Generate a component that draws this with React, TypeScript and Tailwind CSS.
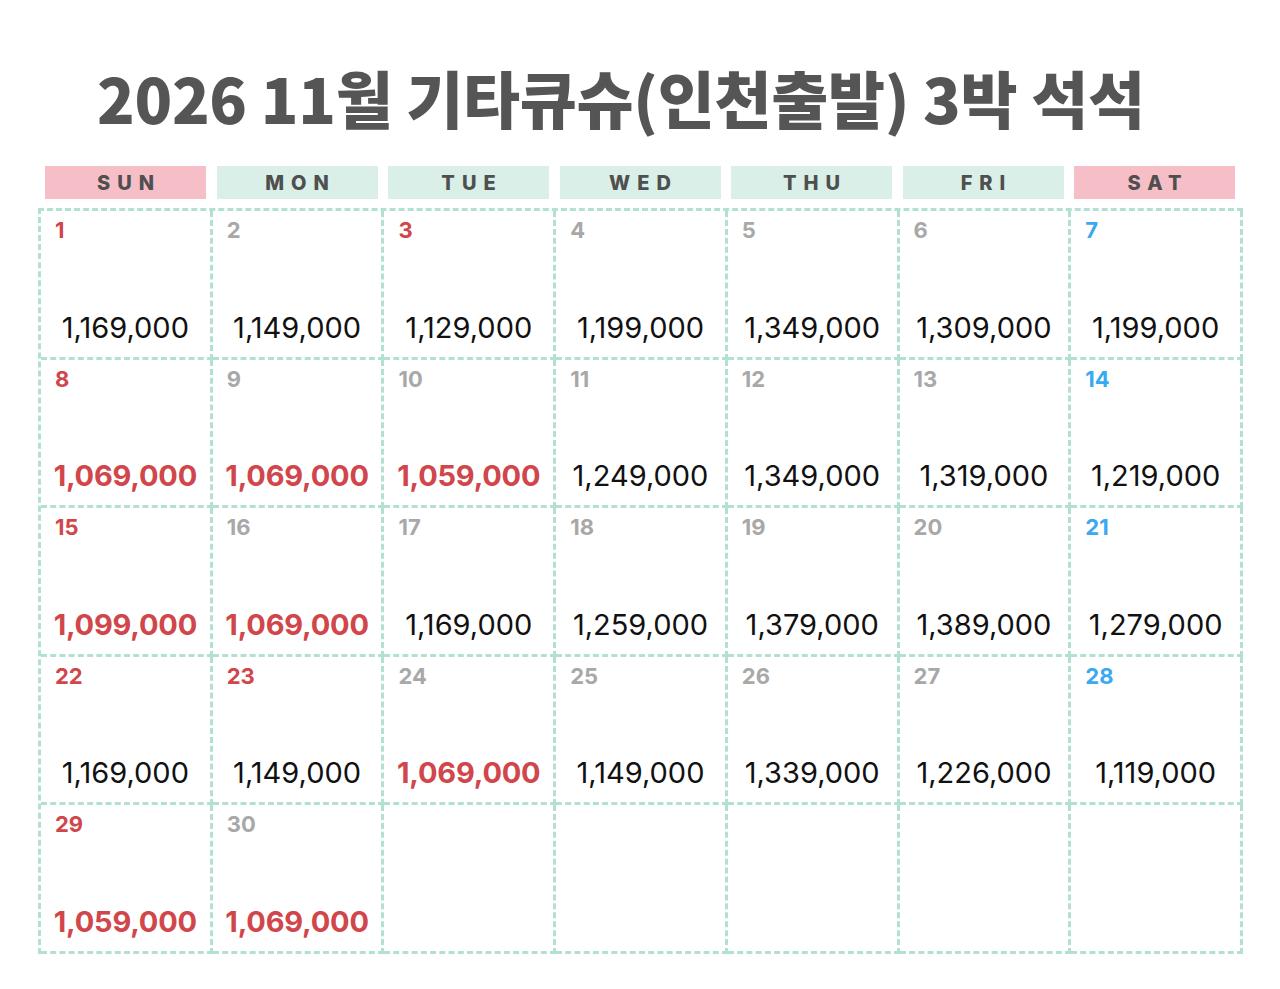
import React from 'react';

type Tone = 'sun' | 'day' | 'sat';

interface DayCell {
  day: number;
  tone: Tone;
  price: string;
  hot?: boolean;
}

const HEADERS = [
  { label: 'SUN', bg: 'bg-[#f6bec7]' },
  { label: 'MON', bg: 'bg-[#d9efe7]' },
  { label: 'TUE', bg: 'bg-[#d9efe7]' },
  { label: 'WED', bg: 'bg-[#d9efe7]' },
  { label: 'THU', bg: 'bg-[#d9efe7]' },
  { label: 'FRI', bg: 'bg-[#d9efe7]' },
  { label: 'SAT', bg: 'bg-[#f6bec7]' },
];

const DAYS: (DayCell | null)[] = [
  { day: 1, tone: 'sun', price: '1,169,000' },
  { day: 2, tone: 'day', price: '1,149,000' },
  { day: 3, tone: 'sun', price: '1,129,000' },
  { day: 4, tone: 'day', price: '1,199,000' },
  { day: 5, tone: 'day', price: '1,349,000' },
  { day: 6, tone: 'day', price: '1,309,000' },
  { day: 7, tone: 'sat', price: '1,199,000' },

  { day: 8, tone: 'sun', price: '1,069,000', hot: true },
  { day: 9, tone: 'day', price: '1,069,000', hot: true },
  { day: 10, tone: 'day', price: '1,059,000', hot: true },
  { day: 11, tone: 'day', price: '1,249,000' },
  { day: 12, tone: 'day', price: '1,349,000' },
  { day: 13, tone: 'day', price: '1,319,000' },
  { day: 14, tone: 'sat', price: '1,219,000' },

  { day: 15, tone: 'sun', price: '1,099,000', hot: true },
  { day: 16, tone: 'day', price: '1,069,000', hot: true },
  { day: 17, tone: 'day', price: '1,169,000' },
  { day: 18, tone: 'day', price: '1,259,000' },
  { day: 19, tone: 'day', price: '1,379,000' },
  { day: 20, tone: 'day', price: '1,389,000' },
  { day: 21, tone: 'sat', price: '1,279,000' },

  { day: 22, tone: 'sun', price: '1,169,000' },
  { day: 23, tone: 'sun', price: '1,149,000' },
  { day: 24, tone: 'day', price: '1,069,000', hot: true },
  { day: 25, tone: 'day', price: '1,149,000' },
  { day: 26, tone: 'day', price: '1,339,000' },
  { day: 27, tone: 'day', price: '1,226,000' },
  { day: 28, tone: 'sat', price: '1,119,000' },

  { day: 29, tone: 'sun', price: '1,059,000', hot: true },
  { day: 30, tone: 'day', price: '1,069,000', hot: true },
  null,
  null,
  null,
  null,
  null,
];

const TONE_CLASS: Record<Tone, string> = {
  sun: 'text-[#d0464a]',
  day: 'text-[#a8a8a8]',
  sat: 'text-[#3aa9ef]',
};

const latin = { fontFamily: 'Inter, "Noto Sans", sans-serif' };

function Cell({ cell }: { cell: DayCell | null }) {
  return (
    <div className="flex flex-col border-r-[3px] border-b-[3px] border-dashed border-[#b2e1d2] px-2 pt-[8px] pb-[15px]">
      {cell && (
        <>
          <div className={`pl-[6px] text-[22px] leading-none font-bold ${TONE_CLASS[cell.tone]}`} style={latin}>
            {cell.day}
          </div>
          <div className="flex-1" />
          <div
            className={
              cell.hot
                ? 'text-center text-[29px] leading-none font-bold tracking-[-0.2px] text-[#d0464a]'
                : 'text-center text-[29px] leading-none font-normal text-[#111]'
            }
            style={latin}
          >
            {cell.price}
          </div>
        </>
      )}
    </div>
  );
}

export default function App() {
  return (
    <div className="h-[989px] w-[1280px] bg-white">
      <h1
        className="pt-[52px] pl-[97px] text-[62px] leading-[90px] font-black tracking-[-0.3px] text-[#555555]"
        style={{ fontFamily: '"Noto Sans CJK KR", "Noto Sans", sans-serif' }}
      >
        2026 11월 기타큐슈(인천출발) 3박 석석
      </h1>

      <div className="mt-[24px] ml-[45px] grid w-[1190px] grid-cols-7 gap-x-[10.5px]">
        {HEADERS.map((h) => (
          <div
            key={h.label}
            className={`flex h-[33px] items-center justify-center pl-[0.35em] text-[20px] font-extrabold tracking-[0.35em] text-[#4f4f4f] ${h.bg}`}
            style={latin}
          >
            {h.label}
          </div>
        ))}
      </div>

      <div className="mt-[9px] ml-[38px] grid w-[1205px] grid-cols-7 grid-rows-[repeat(5,148.6px)] border-t-[3px] border-l-[3px] border-dashed border-[#b2e1d2]">
        {DAYS.map((c, i) => (
          <Cell key={i} cell={c} />
        ))}
      </div>
    </div>
  );
}
